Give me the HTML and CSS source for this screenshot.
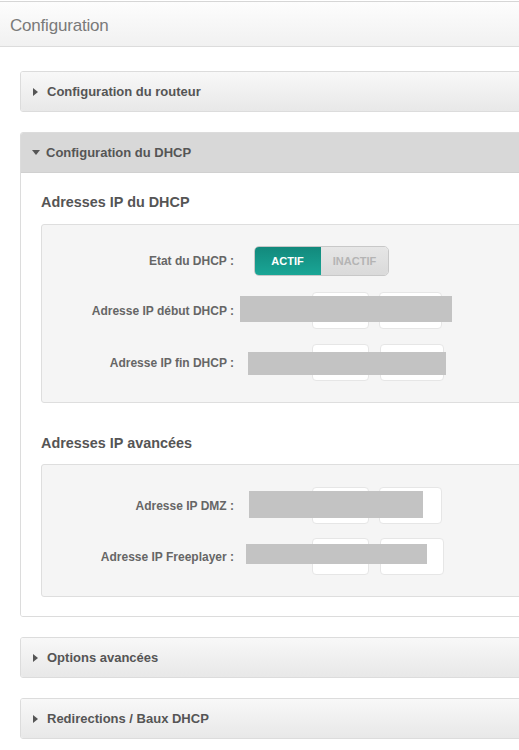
FILE: index.html
```html
<!DOCTYPE html>
<html lang="fr">
<head>
<meta charset="utf-8">
<title>Configuration</title>
<link rel="stylesheet" href="styles.css">
</head>
<body>
<div class="page">
  <div class="topbar"><h1 class="title">Configuration</h1></div>
  <div class="content">
    <section class="acc">
      <div class="acc-head"><span class="tri tri-right"></span>Configuration du routeur</div>
    </section>

    <section class="acc acc-open">
      <div class="acc-head"><span class="tri tri-down"></span>Configuration du DHCP</div>
      <div class="acc-body">
        <h2 class="group-title">Adresses IP du DHCP</h2>
        <div class="group group-dhcp">
          <div class="row row-toggle">
            <label class="lbl">Etat du DHCP :</label>
            <div class="toggle">
              <span class="tg tg-on">ACTIF</span>
              <span class="tg tg-off">INACTIF</span>
            </div>
          </div>
          <div class="row">
            <label class="lbl">Adresse IP début DHCP :</label>
            <div class="ip">
              <span class="box box-a"></span><span class="box box-b"></span>
              <span class="redact redact-1"></span>
            </div>
          </div>
          <div class="row">
            <label class="lbl">Adresse IP fin DHCP :</label>
            <div class="ip">
              <span class="box box-a"></span><span class="box box-b2"></span>
              <span class="redact redact-2"></span>
            </div>
          </div>
        </div>

        <h2 class="group-title group-title-2">Adresses IP avancées</h2>
        <div class="group group-adv">
          <div class="row">
            <label class="lbl">Adresse IP DMZ :</label>
            <div class="ip">
              <span class="box box-a"></span><span class="box box-b"></span>
              <span class="redact redact-3"></span>
            </div>
          </div>
          <div class="row">
            <label class="lbl">Adresse IP Freeplayer :</label>
            <div class="ip">
              <span class="box box-a"></span><span class="box box-b2"></span>
              <span class="redact redact-4"></span>
            </div>
          </div>
        </div>
      </div>
    </section>

    <section class="acc">
      <div class="acc-head"><span class="tri tri-right"></span>Options avancées</div>
    </section>

    <section class="acc">
      <div class="acc-head"><span class="tri tri-right"></span>Redirections / Baux DHCP</div>
    </section>
  </div>
</div>
</body>
</html>
```
FILE: styles.css
```css
html, body {
  margin: 0;
  padding: 0;
  background: #fff;
  overflow: hidden;
}
body {
  font-family: "Liberation Sans", Arial, sans-serif;
  color: #555;
}
.page {
  width: 560px;
}
.topbar {
  margin-top: 1px;
  height: 44px;
  border-top: 1px solid #d6d6d6;
  border-bottom: 1px solid #dcdcdc;
  background: linear-gradient(#fdfdfd, #f1f1f1);
  display: flex;
  align-items: center;
  padding-left: 10px;
}
.title {
  margin: 0;
  font-size: 17px;
  font-weight: normal;
  color: #7a7a7a;
  letter-spacing: -0.2px;
  position: relative;
  top: 2px;
}
.content {
  padding: 24px 0 0 20px;
  display: flex;
  flex-direction: column;
  gap: 20px;
}
.acc {
  border: 1px solid #dcdcdc;
  border-radius: 3px;
  overflow: hidden;
}
.acc-head {
  height: 39px;
  display: flex;
  align-items: center;
  padding-left: 12px;
  background: linear-gradient(#f8f8f8, #e8e8e8);
  font-size: 13px;
  font-weight: bold;
  color: #555;
}
.acc-open .acc-head {
  background: #d8d8d8;
  height: 39px;
  padding-left: 11px;
}
.tri {
  display: inline-block;
  width: 0;
  height: 0;
}
.tri-right {
  border-top: 4px solid transparent;
  border-bottom: 4px solid transparent;
  border-left: 5px solid #555;
  margin-right: 9px;
}
.tri-down {
  border-left: 4px solid transparent;
  border-right: 4px solid transparent;
  border-top: 5px solid #555;
  margin-right: 6px;
}
.acc-body {
  background: #fff;
  border-top: 1px solid #d0d0d0;
  padding: 19px 0 19px 20px;
}
.group-title {
  margin: 0 0 12px;
  font-size: 14.4px;
  line-height: 20px;
  font-weight: bold;
  color: #555;
}
.group-title-2 {
  margin-top: 30px;
  margin-bottom: 11px;
}
.group {
  background: #f5f5f5;
  border: 1px solid #dedede;
  border-radius: 3px;
  padding: 21px 0 21px 0;
  display: flex;
  flex-direction: column;
  gap: 15px;
}
.group-dhcp .row-toggle {
  margin-bottom: 1px;
}
.group-adv {
  padding-top: 22px;
  gap: 14px;
}
.row {
  display: flex;
  align-items: center;
}
.lbl {
  width: 192px;
  text-align: right;
  font-size: 12px;
  font-weight: bold;
  color: #666;
  margin-right: 20px;
}
.toggle {
  display: flex;
  height: 30px;
  border-radius: 5px;
  overflow: hidden;
  border: 1px solid #c8c8c8;
  box-sizing: border-box;
}
.tg {
  display: flex;
  align-items: center;
  justify-content: center;
  font-size: 11px;
  font-weight: bold;
}
.tg-on {
  width: 67px;
  color: #fff;
  background: linear-gradient(#12887b, #1aa797);
  margin: -1px 0 -1px -1px;
  border-radius: 5px 0 0 5px;
}
.tg-off {
  width: 67px;
  color: #b4b4b4;
  background: linear-gradient(#e6e6e6, #dadada);
}
.ip {
  position: relative;
  display: flex;
  gap: 10px;
  padding-left: 58px;
  height: 37px;
}
.box {
  display: block;
  height: 37px;
  background: #fff;
  border: 1px solid #e6e6e6;
  border-radius: 4px;
  box-sizing: border-box;
}
.box-a { width: 57px; }
.box-b { width: 63px; }
.box-b2 { width: 64px; margin-left: 1px; }
.redact {
  position: absolute;
  background: #c3c3c3;
}
.redact-1 { left: -14px; top: 4px; width: 212px; height: 26px; }
.redact-2 { left: -6px; top: 8px; width: 198px; height: 23px; }
.redact-3 { left: -5px; top: 4px; width: 174px; height: 27px; }
.redact-4 { left: -8px; top: 6px; width: 181px; height: 20px; }
```
